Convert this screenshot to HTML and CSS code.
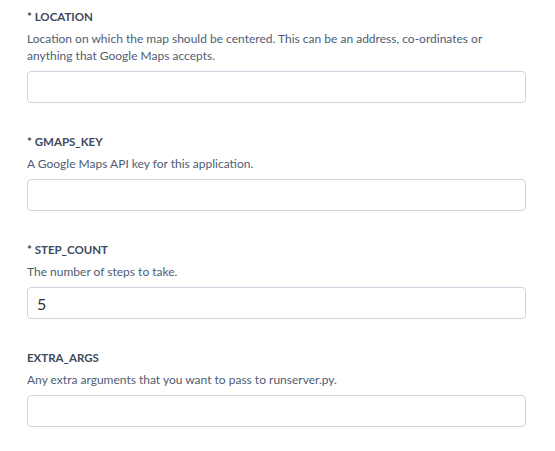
FILE: index.html
```html
<!DOCTYPE html>
<html lang="en">
<head>
  <meta charset="UTF-8" />
  <meta name="viewport" content="width=device-width, initial-scale=1.0" />
  <title>Config Vars</title>
  <link rel="stylesheet" href="styles.css">
</head>
<body>
  <form class="config">
    <div class="field">
      <label for="location">* LOCATION</label>
      <p>Location on which the map should be centered. This can be an address, co-ordinates or anything that Google Maps accepts.</p>
      <input type="text" id="location" />
    </div>
    <div class="field">
      <label for="gmapsKey">* GMAPS_KEY</label>
      <p>A Google Maps API key for this application.</p>
      <input type="text" id="gmapsKey" />
    </div>
    <div class="field">
      <label for="stepCount">* STEP_COUNT</label>
      <p>The number of steps to take.</p>
      <input type="text" id="stepCount" value="5" />
    </div>
    <div class="field">
      <label for="extraArgs">EXTRA_ARGS</label>
      <p>Any extra arguments that you want to pass to runserver.py.</p>
      <input type="text" id="extraArgs" />
    </div>
  </form>
</body>
</html>
```

FILE: styles.css
```css
body {
  font-family: Lato, "Open Sans", sans-serif;
  margin: 0;
  padding: 0;
  background: #fff;
}
.config {
  width: 499px;
  padding: 8px 0 0 27px;
  display: flex;
  flex-direction: column;
  gap: 30px;
}
.field {
  display: flex;
  flex-direction: column;
}
.field label {
  font-size: 11.5px;
  font-weight: bold;
  line-height: 18px;
  color: #3f4a5e;
  margin-bottom: 4px;
}
.field p {
  margin: 0 0 7px;
  font-size: 12px;
  line-height: 17px;
  color: #4f5d73;
}
.field input {
  box-sizing: border-box;
  width: 100%;
  height: 32px;
  margin: 0;
  padding: 0 9px;
  border: 1px solid #ccd4e2;
  border-radius: 4px;
  font-family: inherit;
  font-size: 16px;
  color: #333;
  outline: none;
}
```
